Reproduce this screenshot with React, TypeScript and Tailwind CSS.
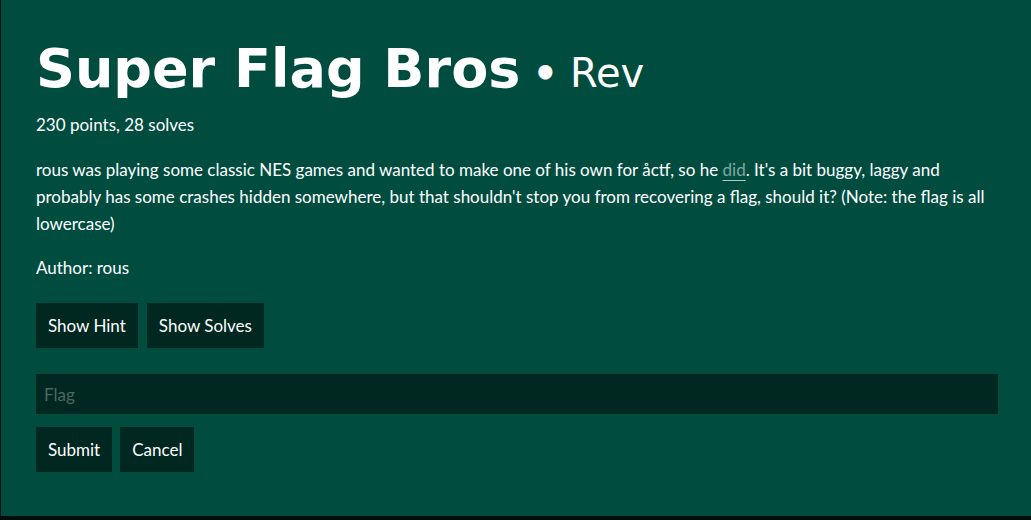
import { useState } from "react";

const buttonClass =
  "h-[45px] cursor-pointer bg-[#002720] px-3 text-[17px] leading-[27px] text-white hover:bg-[#001a15]";

export default function App() {
  const [flag, setFlag] = useState("");

  return (
    <div className="min-h-screen bg-[#000d0b] pb-1 pl-px font-['Lato',sans-serif] text-[17px] leading-[27px] text-white">
      <main className="bg-[#004d40] pt-9 pr-[33px] pb-11 pl-[35px]">
        <h1 className="flex flex-wrap items-baseline font-['DejaVu_Sans',sans-serif] text-[54px] leading-[66px] font-bold">
          <span>Super Flag Bros</span>
          <span className="ml-3 text-[40px] leading-none font-bold">•</span>
          <small className="ml-3 text-[40px] leading-none font-normal">Rev</small>
        </h1>
        <p className="mt-[9px]">230 points, 28 solves</p>
        <p className="mt-[18px]">
          rous was playing some classic NES games and wanted to make one of his own for åctf, so he{" "}
          <a href="#did" className="text-[#80a69f] underline decoration-[#b2cac6] decoration-1 underline-offset-4">
            did
          </a>
          . It's a bit buggy, laggy and probably has some crashes hidden somewhere, but that
          shouldn't stop you from recovering a flag, should it? (Note: the flag is all lowercase)
        </p>
        <p className="mt-[17px]">Author: rous</p>
        <div className="mt-[22px] flex gap-[9px]">
          <button type="button" className={buttonClass}>Show Hint</button>
          <button type="button" className={buttonClass}>Show Solves</button>
        </div>
        <form className="mt-[26px]" onSubmit={(event) => event.preventDefault()}>
          <input
            type="text"
            aria-label="Flag"
            placeholder="Flag"
            value={flag}
            onChange={(event) => setFlag(event.target.value)}
            className="block h-10 w-full bg-[#002720] px-2 text-[17px] text-white outline-none placeholder:text-[#4d6863]"
          />
          <div className="mt-[13px] flex gap-2">
            <button type="submit" className={buttonClass}>Submit</button>
            <button type="button" className={buttonClass} onClick={() => setFlag("")}>Cancel</button>
          </div>
        </form>
      </main>
    </div>
  );
}
